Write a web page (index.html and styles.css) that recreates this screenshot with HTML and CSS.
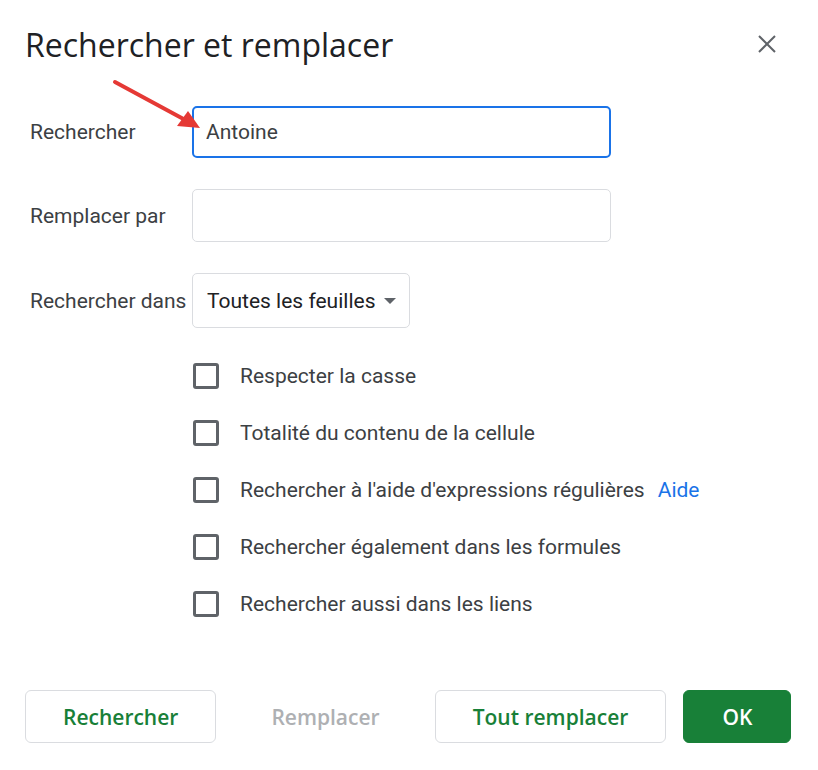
FILE: index.html
```html
<!DOCTYPE html>
<html lang="fr">
<head>
    <meta charset="UTF-8">
    <meta name="viewport" content="width=device-width, initial-scale=1.0">
    <title>Rechercher et remplacer</title>
    <link rel="stylesheet" href="styles.css">
</head>
<body>

<div class="dialog">
    <div class="dialog-header">
        <div class="dialog-title">Rechercher et remplacer</div>
        <button class="close-btn" type="button" aria-label="Fermer">
            <svg width="18" height="18" viewBox="0 0 18 18">
                <path d="M1 1 L17 17 M17 1 L1 17" stroke="#5f6368" stroke-width="2" fill="none"/>
            </svg>
        </button>
    </div>

    <!-- Champs de recherche -->
    <div class="form-row">
        <label for="find" class="form-label">Rechercher</label>
        <input type="text" id="find" class="text-field focused" value="Antoine">
    </div>
    <div class="form-row">
        <label for="replace" class="form-label">Remplacer par</label>
        <input type="text" id="replace" class="text-field">
    </div>
    <div class="form-row">
        <label class="form-label">Rechercher dans</label>
        <div class="select-field">
            <span>Toutes les feuilles</span>
            <span class="caret"></span>
        </div>
    </div>

    <!-- Options -->
    <div class="options">
        <div class="option"><span class="checkbox"></span>Respecter la casse</div>
        <div class="option"><span class="checkbox"></span>Totalité du contenu de la cellule</div>
        <div class="option"><span class="checkbox"></span>Rechercher à l'aide d'expressions régulières<a class="help-link" href="#">Aide</a></div>
        <div class="option"><span class="checkbox"></span>Rechercher également dans les formules</div>
        <div class="option"><span class="checkbox"></span>Rechercher aussi dans les liens</div>
    </div>

    <!-- Boutons -->
    <div class="actions">
        <button class="btn" type="button">Rechercher</button>
        <button class="btn btn-disabled" type="button" disabled>Remplacer</button>
        <button class="btn" type="button">Tout remplacer</button>
        <button class="btn btn-primary" type="button">OK</button>
    </div>

    <!-- Flèche d'annotation -->
    <svg class="annotation-arrow" width="100" height="60" viewBox="0 0 100 60">
        <line x1="4" y1="4" x2="78" y2="44" stroke="#e53935" stroke-width="4" stroke-linecap="round"/>
        <polygon points="89,50 66,48 77,33" fill="#e53935"/>
    </svg>
</div>

</body>
</html>
```

FILE: styles.css
```css
/* Colors */
:root {
    --text-dark: #202124;
    --text: #3c4043;
    --icon: #5f6368;
    --border: #dadce0;
    --blue: #1a73e8;
    --green: #188038;
    --disabled: #aeb0b3;
    --white: #FFFFFF;
}

body {
    margin: 0;
    background-color: var(--white);
    font-family: Roboto, "Liberation Sans", sans-serif;
    color: var(--text);
}

.dialog {
    position: relative;
    width: 766px;
    padding: 25px 27px 0 25px;
}

.dialog-header {
    display: flex;
    justify-content: space-between;
    align-items: center;
    margin-bottom: 41px;
}

.dialog-title {
    font-family: "Open Sans", sans-serif;
    font-size: 32px;
    line-height: 40px;
    color: var(--text-dark);
}

.close-btn {
    background: none;
    border: none;
    padding: 0;
    margin: 0 15px 2px 0;
    width: 18px;
    height: 18px;
    cursor: pointer;
}

.form-row {
    display: flex;
    align-items: center;
    margin-bottom: 31px;
    padding-left: 5px;
}

.form-label {
    width: 162px;
    font-size: 21px;
}

.text-field {
    width: 419px;
    height: 53px;
    box-sizing: border-box;
    border: 1px solid var(--border);
    border-radius: 5px;
    padding: 0 13px;
    font-family: inherit;
    font-size: 21px;
    color: var(--text);
    outline: none;
}

.text-field.focused {
    height: 52px;
    border: 2px solid var(--blue);
    padding: 0 12px;
}

.select-field {
    display: flex;
    align-items: center;
    gap: 9px;
    height: 55px;
    box-sizing: border-box;
    border: 1px solid var(--border);
    border-radius: 5px;
    padding: 0 13px 0 14px;
    font-size: 21px;
    color: var(--text-dark);
}

.caret {
    width: 0;
    height: 0;
    border-left: 6px solid transparent;
    border-right: 6px solid transparent;
    border-top: 6px solid var(--icon);
}

.options {
    margin: -12px 0 0 168px;
}

.option {
    display: flex;
    align-items: center;
    height: 57px;
    font-size: 21px;
}

.checkbox {
    width: 26px;
    height: 26px;
    box-sizing: border-box;
    border: 3px solid var(--icon);
    border-radius: 3px;
    margin-right: 21px;
}

.help-link {
    margin-left: 13px;
    color: var(--blue);
    text-decoration: none;
}

.actions {
    display: flex;
    gap: 17px;
    margin-top: 58px;
}

.btn {
    flex-shrink: 0;
    height: 53px;
    padding: 0 37px;
    background-color: var(--white);
    border: 1px solid var(--border);
    border-radius: 6px;
    font-family: "Open Sans", sans-serif;
    font-weight: 600;
    font-size: 21px;
    white-space: nowrap;
    color: var(--green);
    cursor: pointer;
}

.btn-disabled {
    border-color: transparent;
    color: var(--disabled);
    cursor: default;
}

.btn-primary {
    background-color: var(--green);
    border-color: var(--green);
    color: var(--white);
    min-width: 108px;
}

.annotation-arrow {
    position: absolute;
    left: 111px;
    top: 78px;
}
```
